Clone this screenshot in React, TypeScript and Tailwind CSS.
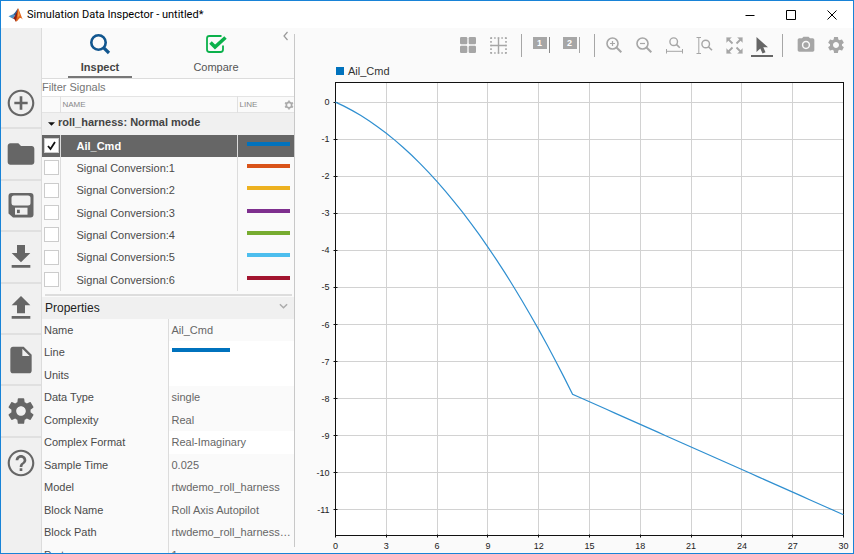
import { useLayoutEffect, useRef, useState } from 'react';
import type { ReactNode } from 'react';

interface Signal {
  name: string;
  color: string;
}

interface Property {
  label: string;
  value?: string;
  line?: boolean;
  editable?: boolean;
}

const signals: Signal[] = [
  { name: 'Ail_Cmd', color: '#0072bd' },
  { name: 'Signal Conversion:1', color: '#d95319' },
  { name: 'Signal Conversion:2', color: '#edb120' },
  { name: 'Signal Conversion:3', color: '#7e2f8e' },
  { name: 'Signal Conversion:4', color: '#77ac30' },
  { name: 'Signal Conversion:5', color: '#4dbeee' },
  { name: 'Signal Conversion:6', color: '#a2142f' },
];

const properties: Property[] = [
  { label: 'Name', value: 'Ail_Cmd' },
  { label: 'Line', line: true, editable: true },
  { label: 'Units', value: '', editable: true },
  { label: 'Data Type', value: 'single' },
  { label: 'Complexity', value: 'Real' },
  { label: 'Complex Format', value: 'Real-Imaginary', editable: true },
  { label: 'Sample Time', value: '0.025' },
  { label: 'Model', value: 'rtwdemo_roll_harness' },
  { label: 'Block Name', value: 'Roll Axis Autopilot' },
  { label: 'Block Path', value: 'rtwdemo_roll_harness/Roll Axis Autopilot' },
  { label: 'Port', value: '1' },
];

const GEAR =
  'M19.14 12.94c.04-.3.06-.61.06-.94 0-.32-.02-.64-.07-.94l2.03-1.58c.18-.14.23-.41.12-.61l-1.92-3.32c-.12-.22-.37-.29-.59-.22l-2.39.96c-.5-.38-1.03-.7-1.62-.94l-.36-2.54c-.04-.24-.24-.41-.48-.41h-3.84c-.24 0-.43.17-.47.41l-.36 2.54c-.59.24-1.13.57-1.62.94l-2.39-.96c-.22-.08-.47 0-.59.22L2.74 8.87c-.12.21-.08.47.12.61l2.03 1.58c-.05.3-.09.63-.09.94s.02.64.07.94l-2.03 1.58c-.18.14-.23.41-.12.61l1.92 3.32c.12.22.37.29.59.22l2.39-.96c.5.38 1.03.7 1.62.94l.36 2.54c.05.24.24.41.48.41h3.84c.24 0 .44-.17.47-.41l.36-2.54c.59-.24 1.13-.56 1.62-.94l2.39.96c.22.08.47 0 .59-.22l1.92-3.32c.12-.22.07-.47-.12-.61l-2.01-1.58zM12 15.6c-1.98 0-3.6-1.62-3.6-3.6s1.62-3.6 3.6-3.6 3.6 1.62 3.6 3.6-1.62 3.6-3.6 3.6z';

function Glyph({ d, className }: { d: string; className: string }) {
  return (
    <svg viewBox="0 0 24 24" className={className} fill="currentColor" aria-hidden="true">
      <path d={d} />
    </svg>
  );
}

function MatlabLogo() {
  return (
    <svg viewBox="0 0 16 16" className="w-4 h-4" aria-hidden="true">
      <path d="M0.5 9.2 5 7.2 7.3 9 4.6 11.6Z" fill="#4a90c8" />
      <path d="M5 7.2C7 6.6 8.2 3.2 10 1.2L8.2 7.4 7.3 9Z" fill="#2b5f96" />
      <path d="M10 1.2C8.8 4 8 8.6 4.6 11.6 6 11.4 6.8 12.6 7.6 14.6 10 13.8 10.6 10.6 12.2 10.4Z" fill="#8d2013" />
      <path d="M10 1.2C11.6 3.4 13.2 10 15.2 12.8 13.4 11 12.4 10.4 11.2 11.4 10 12.4 9 14.4 7.6 14.6 9.4 10 9 5 10 1.2Z" fill="#e2661c" />
      <path d="M10 1.2C10.2 4 10.4 7 9.6 10.4L11.8 8.2Z" fill="#f5a04a" />
    </svg>
  );
}

function TitleBar() {
  return (
    <header className="flex items-center h-[27px] shrink-0 bg-white pl-[7px] pr-px">
      <MatlabLogo />
      <h1 className="ml-[3px] text-[11px] leading-4 text-black font-[Roboto,sans-serif]">
        Simulation Data Inspector - untitled*
      </h1>
      <div className="ml-auto flex text-black">
        <button aria-label="Minimize" className="w-[41px] h-6 grid place-items-center">
          <svg viewBox="0 0 10 10" className="w-[10px] h-[10px]" stroke="currentColor">
            <path d="M0.5 5.5h9" />
          </svg>
        </button>
        <button aria-label="Maximize" className="w-[41px] h-6 grid place-items-center">
          <svg viewBox="0 0 10 10" className="w-[10px] h-[10px]" stroke="currentColor" fill="none">
            <path d="M0.5 0.5h9v9h-9z" />
          </svg>
        </button>
        <button aria-label="Close" className="w-[41px] h-6 grid place-items-center">
          <svg viewBox="0 0 10 10" className="w-[10px] h-[10px]" stroke="currentColor">
            <path d="M0.5 0.5l9 9M9.5 0.5l-9 9" />
          </svg>
        </button>
      </div>
    </header>
  );
}

const railItems: { label: string; icon: ReactNode }[] = [
  {
    label: 'New',
    icon: (
      <Glyph
        className="w-8 h-8"
        d="M13 7h-2v4H7v2h4v4h2v-4h4v-2h-4V7zm-1-5C6.48 2 2 6.48 2 12s4.48 10 10 10 10-4.48 10-10S17.52 2 12 2zm0 18.4c-4.63 0-8.4-3.77-8.4-8.4s3.77-8.4 8.4-8.4 8.4 3.77 8.4 8.4-3.77 8.4-8.4 8.4z"
      />
    ),
  },
  {
    label: 'Open',
    icon: (
      <Glyph
        className="w-8 h-8"
        d="M10 4H4c-1.1 0-1.99.9-1.99 2L2 18c0 1.1.9 2 2 2h16c1.1 0 2-.9 2-2V8c0-1.1-.9-2-2-2h-8l-2-2z"
      />
    ),
  },
  {
    label: 'Save',
    icon: (
      <svg viewBox="0 0 32 32" className="w-8 h-8" aria-hidden="true">
        <path d="M6.5 4h19a3 3 0 0 1 3 3v18.5a3 3 0 0 1-3 3H8l-4.5-4V7a3 3 0 0 1 3-3Z" fill="currentColor" />
        <rect x="6.500" y="6.500" width="19" height="10" rx="2.500" fill="#f0f0f0" />
        <rect x="10" y="18.700" width="12.500" height="7" fill="#f0f0f0" />
        <rect x="12" y="20.700" width="2.800" height="3.400" fill="currentColor" />
      </svg>
    ),
  },
  { label: 'Import', icon: <Glyph className="w-8 h-8" d="M19 9h-4V3H9v6H5l7 7 7-7zM5 18v2h14v-2H5z" /> },
  { label: 'Export', icon: <Glyph className="w-8 h-8" d="M9 16h6v-6h4l-7-7-7 7h4v6zm-4 2h14v2H5v-2z" /> },
  {
    label: 'Report',
    icon: (
      <Glyph
        className="w-8 h-8"
        d="M6 2c-1.1 0-1.99.9-1.99 2L4 20c0 1.1.89 2 1.99 2H18c1.1 0 2-.9 2-2V8l-6-6H6zm7 7V3.500L18.500 9H13z"
      />
    ),
  },
  { label: 'Preferences', icon: <Glyph className="w-8 h-8" d={GEAR} /> },
  {
    label: 'Help',
    icon: (
      <Glyph
        className="w-8 h-8"
        d="M11 18h2v-2h-2v2zm1-16C6.48 2 2 6.48 2 12s4.48 10 10 10 10-4.48 10-10S17.52 2 12 2zm0 18.4c-4.63 0-8.4-3.77-8.4-8.4s3.77-8.4 8.4-8.4 8.4 3.77 8.4 8.4-3.77 8.4-8.4 8.4zM12 6c-2.21 0-4 1.79-4 4h2c0-1.1.9-2 2-2s2 .9 2 2c0 2-3 1.75-3 5h2c0-2.25 3-2.5 3-5 0-2.21-1.79-4-4-4z"
      />
    ),
  },
];

function Rail() {
  return (
    <nav className="w-[41px] shrink-0 pt-[50px] bg-[#f0f0f0] border-r border-[#dcdcdc] text-[#666]">
      <div className="grid grid-rows-8 h-[411px] divide-y-2 divide-[#e0e0e0]">
        {railItems.map((item) => (
          <button key={item.label} aria-label={item.label} className="grid place-items-center">
            {item.icon}
          </button>
        ))}
      </div>
    </nav>
  );
}

function PanelTabs() {
  return (
    <div className="relative flex h-[51px] shrink-0 pr-5 border-b border-[#dcdcdc]">
      <div className="w-1/2 flex justify-center">
        <button className="w-16 flex flex-col items-center pt-[5px] border-b-2 border-[#777] text-[11px] leading-4 font-bold text-[#444]">
          <svg viewBox="0 0 22 22" className="w-[22px] h-[22px] mb-1" fill="none" stroke="#11568f">
            <circle cx="9.500" cy="9.500" r="7.200" strokeWidth="2.600" />
            <path d="M14.8 14.8 20 20" strokeWidth="3.200" />
          </svg>
          Inspect
        </button>
      </div>
      <div className="w-1/2 flex justify-center">
        <button className="w-16 flex flex-col items-center pt-[5px] text-[11px] leading-4 text-[#555]">
          <svg viewBox="0 0 22 22" className="w-[22px] h-[22px] mb-1" fill="none" stroke="#0bb14b">
            <path d="M16.5 3H4.500A2.500 2.500 0 0 0 2 5.500v11A2.500 2.500 0 0 0 4.500 19h11a2.500 2.500 0 0 0 2.500-2.500v-4" strokeWidth="1.800" />
            <path d="m5.500 9.500 4.500 4.500L20.500 4.500" strokeWidth="3.600" />
          </svg>
          Compare
        </button>
      </div>
      <button aria-label="Collapse panel" className="absolute right-1 top-[3px]">
        <svg viewBox="0 0 8 10" className="w-2 h-[10px]" fill="none" stroke="#999" strokeWidth="1.200">
          <path d="M5.500 1 2 5l3.500 4" />
        </svg>
      </button>
    </div>
  );
}

function SignalTable({ checked, onToggle }: { checked: string[]; onToggle: (name: string) => void }) {
  return (
    <table className="w-full table-fixed border-collapse text-[11px] leading-4 text-[#4a4a4a]">
      <colgroup>
        <col className="w-[18px]" />
        <col />
        <col className="w-[57px]" />
      </colgroup>
      <thead>
        <tr className="h-4 border-y border-[#e4e4e4] text-[8px] leading-3 text-[#888] text-left">
          <th className="border-r border-[#e0e0e0]" aria-label="Plotted" />
          <th className="border-r border-[#e0e0e0] pl-[2px] font-normal">NAME</th>
          <th className="pl-[2px] font-normal">
            <div className="flex items-center justify-between">
              LINE
              <button aria-label="Configure columns">
                <svg viewBox="0 0 24 24" className="w-[10px] h-[10px]" fill="none" stroke="#aaa" strokeWidth="4">
                  <circle cx="12" cy="12" r="6.500" />
                  <path d="M12 1v4M12 19v4M2.500 6.500l3.500 2M18 15.500l3.500 2M2.500 17.500l3.500-2M18 8.500l3.500-2" />
                </svg>
              </button>
            </div>
          </th>
        </tr>
        <tr className="h-[22px] bg-[#f0f0f0] text-left">
          <th colSpan={3} className="py-0 pl-[6px] pb-1 font-bold text-[#444]">
            <button className="flex items-center gap-[3px]">
              <svg viewBox="0 0 8 4" className="w-[7px] h-1 mt-1" fill="#111">
                <path d="M0 0h8L4 4z" />
              </svg>
              roll_harness: Normal mode
            </button>
          </th>
        </tr>
      </thead>
      <tbody>
        {signals.map((signal, i) => {
          const isChecked = checked.includes(signal.name);
          const selected = i === 0;
          return (
            <tr key={signal.name} className={`h-[22px] nth-[3n]:h-[23px] ${selected ? 'bg-[#666] text-white' : ''}`}>
              <td className="border-r border-[#dcdcdc] p-0 pl-[2px]">
                <span className="grid w-[15px] h-[15px]">
                  <input
                    id={`signal-${i}`}
                    type="checkbox"
                    checked={isChecked}
                    onChange={() => onToggle(signal.name)}
                    className="col-start-1 row-start-1 appearance-none w-[15px] h-[15px] bg-white border border-[#ccc]"
                  />
                  {isChecked && (
                    <svg
                      viewBox="0 0 15 15"
                      className="col-start-1 row-start-1 w-[15px] h-[15px] pointer-events-none"
                      fill="none"
                      stroke="#111"
                      strokeWidth="1.800"
                    >
                      <path d="m4 8 2.500 3L11 4" />
                    </svg>
                  )}
                </span>
              </td>
              <td className={`border-r border-[#dcdcdc] p-0 pl-4 ${selected ? 'font-bold' : ''}`}>
                <label htmlFor={`signal-${i}`}>{signal.name}</label>
              </td>
              <td className="p-0 pb-1 pl-[9px]">
                <div className="w-[43px] h-1" style={{ backgroundColor: signal.color }} />
              </td>
            </tr>
          );
        })}
      </tbody>
    </table>
  );
}

function PropertiesPanel() {
  return (
    <section className="flex-1 min-h-0 overflow-hidden">
      <h2 className="flex items-center justify-between h-[22px] pl-[3px] pr-[6px] bg-[#f0f0f0] text-[12px] leading-4 text-[#222]">
        Properties
        <svg viewBox="0 0 10 6" className="w-[9px] h-[6px] mb-1" fill="none" stroke="#aaa" strokeWidth="1.600">
          <path d="m1 1 4 4 4-4" />
        </svg>
      </h2>
      <table className="w-full table-fixed border-collapse text-[11px] leading-4">
        <colgroup>
          <col className="w-[126px]" />
          <col />
        </colgroup>
        <tbody>
          {properties.map((prop) => (
            <tr key={prop.label} className="h-[22px] even:h-[23px]">
              <th className="border-r border-[#dcdcdc] p-0 pl-[2px] text-left font-normal text-[#4a4a4a]">{prop.label}</th>
              <td className={`p-0 pl-[3px] pr-[2px] truncate text-[#666] ${prop.editable ? 'bg-white' : ''}`}>
                {prop.line ? <div className="w-[58px] h-1 mb-1 bg-[#0072bd]" /> : prop.value}
              </td>
            </tr>
          ))}
        </tbody>
      </table>
    </section>
  );
}

function ToolButton({ label, children }: { label: string; children: ReactNode }) {
  return (
    <button aria-label={label} className="w-[30px] h-[22px] grid place-items-center">
      {children}
    </button>
  );
}

function CursorBadge({ count, className }: { count: number; className: string }) {
  return (
    <span className="flex items-start gap-[2px]">
      <span className="w-[14px] h-3 bg-[#a6a6a6] text-white text-[9px] leading-3 font-bold text-center">{count}</span>
      <span className={`w-px h-4 ${className}`} />
    </span>
  );
}

function Toolbar() {
  return (
    <div className="flex items-center justify-end h-[34px] shrink-0 pr-[2px] text-[#a6a6a6]">
      <ToolButton label="Layout">
        <svg viewBox="0 0 16 16" className="w-4 h-4" fill="currentColor">
          <rect width="7.300" height="7.300" rx="1.200" />
          <rect x="8.700" width="7.300" height="7.300" rx="1.200" />
          <rect y="8.700" width="7.300" height="7.300" rx="1.200" />
          <rect x="8.700" y="8.700" width="7.300" height="7.300" rx="1.200" />
        </svg>
      </ToolButton>
      <ToolButton label="Clear subplots">
        <svg viewBox="0 0 17 17" className="w-[17px] h-[17px]" stroke="currentColor" fill="none">
          <path d="M8.500 0.500v16M0.500 8.500h16" strokeWidth="1.400" />
          <path d="M0.500 1h16M0.500 16h16" strokeWidth="1.600" strokeDasharray="1.600 2" />
          <path d="M1 0.500v16M16 0.500v16" strokeWidth="1.600" strokeDasharray="1.600 2" />
        </svg>
      </ToolButton>
      <span className="w-px h-[23px] ml-2 mr-1 bg-[#a6a6a6]" />
      <ToolButton label="Show one cursor">
        <CursorBadge count={1} className="bg-[#8a8a8a]" />
      </ToolButton>
      <ToolButton label="Show two cursors">
        <CursorBadge count={2} className="bg-[#a6a6a6]" />
      </ToolButton>
      <span className="w-px h-[23px] ml-2 mr-1 bg-[#a6a6a6]" />
      <ToolButton label="Zoom in">
        <svg viewBox="0 0 16 16" className="w-4 h-4" fill="none" stroke="currentColor">
          <circle cx="6.500" cy="6.500" r="5.500" strokeWidth="1.600" />
          <path d="m10.500 10.500 4.800 4.800" strokeWidth="2" />
          <path d="M6.500 4v5M4 6.500h5" strokeWidth="1.200" />
        </svg>
      </ToolButton>
      <ToolButton label="Zoom out">
        <svg viewBox="0 0 16 16" className="w-4 h-4" fill="none" stroke="currentColor">
          <circle cx="6.500" cy="6.500" r="5.500" strokeWidth="1.600" />
          <path d="m10.500 10.500 4.800 4.800" strokeWidth="2" />
          <path d="M4 6.500h5" strokeWidth="1.200" />
        </svg>
      </ToolButton>
      <ToolButton label="Zoom time axis">
        <svg viewBox="0 0 17 17" className="w-[17px] h-[17px]" fill="none" stroke="currentColor">
          <circle cx="7.700" cy="4.700" r="3.800" strokeWidth="1.400" />
          <path d="m10.400 7.400 3.400 3.400" strokeWidth="1.600" />
          <path d="M0.500 12v4.500M16.500 12v4.500M0.500 14.300h16" />
        </svg>
      </ToolButton>
      <ToolButton label="Zoom signal axis">
        <svg viewBox="0 0 17 17" className="w-[17px] h-[17px]" fill="none" stroke="currentColor">
          <path d="M0.500 0.500h4.500M0.500 16.500h4.500M2.800 0.500v16" />
          <circle cx="9.700" cy="7" r="3.800" strokeWidth="1.400" />
          <path d="m12.400 9.700 3.600 3.600" strokeWidth="1.600" />
        </svg>
      </ToolButton>
      <ToolButton label="Fit to view">
        <svg viewBox="0 0 17 17" className="w-[17px] h-[17px]" fill="currentColor" stroke="currentColor">
          <path d="M0.500 0.500h5l-5 5zM16.500 0.500h-5l5 5zM0.500 16.500h5l-5-5zM16.500 16.500h-5l5-5z" strokeWidth="0.200" />
          <path d="m2 2 4.500 4.500M15 2l-4.500 4.500M2 15l4.500-4.500M15 15l-4.500-4.500" strokeWidth="1.800" />
        </svg>
      </ToolButton>
      <button aria-label="Select" aria-pressed="true" className="w-[22px] h-5 mx-[2px] mt-1 flex justify-center border-b-2 border-[#666] text-[#666]">
        <svg viewBox="0 0 12 17" className="w-3 h-[17px]" fill="currentColor">
          <path d="M0.500 0v15l3.800-3.600 2.200 5 3-1.200-2.200-4.900H12z" />
        </svg>
      </button>
      <span className="w-px h-[23px] ml-[7px] mr-2 bg-[#a6a6a6]" />
      <ToolButton label="Snapshot">
        <Glyph
          className="w-5 h-5"
          d="M12 8.800a3.200 3.200 0 1 0 0 6.400 3.200 3.200 0 0 0 0-6.400zM9 2 7.170 4H4c-1.100 0-2 .9-2 2v12c0 1.100.9 2 2 2h16c1.100 0 2-.9 2-2V6c0-1.100-.9-2-2-2h-3.170L15 2H9zm3 15c-2.760 0-5-2.240-5-5s2.240-5 5-5 5 2.240 5 5-2.240 5-5 5z"
        />
      </ToolButton>
      <ToolButton label="Plot settings">
        <Glyph className="w-5 h-5" d={GEAR} />
      </ToolButton>
    </div>
  );
}

// aileron command: quadratic ramp up to 14 s, then a straight line to 30 s
function aileronCommand(t: number) {
  if (t <= 14) return -(0.203 * t + 0.0257 * t * t);
  return -7.88 - ((t - 14) * 3.25) / 16;
}

const T_MAX = 30;
const Y_MAX = 0.53;
const Y_MIN = -11.69;
const MARGIN = { left: 40, right: 9, top: 3, bottom: 17 };

function Plot() {
  const boxRef = useRef<HTMLDivElement>(null);
  const [size, setSize] = useState({ width: 0, height: 0 });

  useLayoutEffect(() => {
    const box = boxRef.current;
    if (!box) return;
    const measure = () => setSize({ width: box.clientWidth, height: box.clientHeight });
    measure();
    const observer = new ResizeObserver(measure);
    observer.observe(box);
    return () => observer.disconnect();
  }, []);

  const left = MARGIN.left + 0.5;
  const top = MARGIN.top + 0.5;
  const right = size.width - MARGIN.right - 0.5;
  const bottom = size.height - MARGIN.bottom - 0.5;
  const x = (t: number) => left + (t / T_MAX) * (right - left);
  const y = (v: number) => top + ((Y_MAX - v) / (Y_MAX - Y_MIN)) * (bottom - top);
  const snap = (n: number) => Math.floor(n) + 0.5;

  const xTicks = Array.from({ length: 11 }, (_, i) => i * 3);
  const yTicks = Array.from({ length: 12 }, (_, i) => -i);
  const points = Array.from({ length: 61 }, (_, i) => i / 2)
    .map((t) => `${x(t)},${y(aileronCommand(t))}`)
    .join(' ');

  return (
    <div ref={boxRef} className="flex-1 min-h-0 overflow-hidden">
      {size.width > 0 && (
        <svg width={size.width} height={size.height} className="block text-[9px]" role="img" aria-label="Ail_Cmd over time">
          <rect x={left} y={top} width={right - left} height={bottom - top} fill="#fff" />
          <g stroke="#d2d2d2">
            {xTicks.slice(1, -1).map((t) => (
              <line key={t} x1={snap(x(t))} x2={snap(x(t))} y1={top} y2={bottom} />
            ))}
            {yTicks.map((v) => (
              <line key={v} x1={left} x2={right} y1={snap(y(v))} y2={snap(y(v))} />
            ))}
          </g>
          <g stroke="#111">
            <rect x={left} y={top} width={right - left} height={bottom - top} fill="none" />
            {xTicks.map((t) => (
              <line key={t} x1={snap(x(t))} x2={snap(x(t))} y1={bottom - 1} y2={bottom + 2} />
            ))}
            {yTicks.map((v) => (
              <line key={v} x1={left - 2} x2={left + 2} y1={snap(y(v))} y2={snap(y(v))} />
            ))}
          </g>
          <polyline points={points} fill="none" stroke="#2f8fd0" strokeWidth="1.200" />
          <g fill="#222">
            {xTicks.map((t) => (
              <text key={t} x={x(t)} y={bottom + 13} textAnchor="middle">
                {t}
              </text>
            ))}
            {yTicks.map((v) => (
              <text key={v} x={left - 6} y={y(v) + 3} textAnchor="end">
                {v}
              </text>
            ))}
          </g>
        </svg>
      )}
    </div>
  );
}

export default function App() {
  const [checked, setChecked] = useState<string[]>(['Ail_Cmd']);

  const toggle = (name: string) =>
    setChecked((prev) => (prev.includes(name) ? prev.filter((n) => n !== name) : [...prev, name]));

  return (
    <div className="h-screen flex flex-col overflow-hidden border border-[#1883d7] bg-[#fafafa] font-['Liberation_Sans',Arial,sans-serif]">
      <TitleBar />
      <div className="flex flex-1 min-h-0">
        <Rail />
        <aside className="w-[252px] shrink-0 flex flex-col">
          <PanelTabs />
          <input
            aria-label="Filter Signals"
            placeholder="Filter Signals"
            className="h-[17px] shrink-0 pb-px bg-white text-[11px] leading-4 placeholder:text-[#757575] outline-none"
          />
          <SignalTable checked={checked} onToggle={toggle} />
          <div className="h-[2px] shrink-0 mt-[3px] mb-px ml-[3px] mr-[2px] bg-[#ddd]" />
          <PropertiesPanel />
        </aside>
        <main className="flex-1 min-w-0 flex">
          <div className="w-px mt-[6px] mb-[6px] bg-[#c8c8c8]" />
          <div className="flex-1 min-w-0 flex flex-col">
            <Toolbar />
            <div className="flex items-center gap-1 h-[17px] shrink-0 pl-[41px] text-[11px] leading-4 text-[#333]">
              <span className="w-2 h-2 bg-[#0072bd]" />
              Ail_Cmd
            </div>
            <Plot />
          </div>
        </main>
      </div>
    </div>
  );
}
